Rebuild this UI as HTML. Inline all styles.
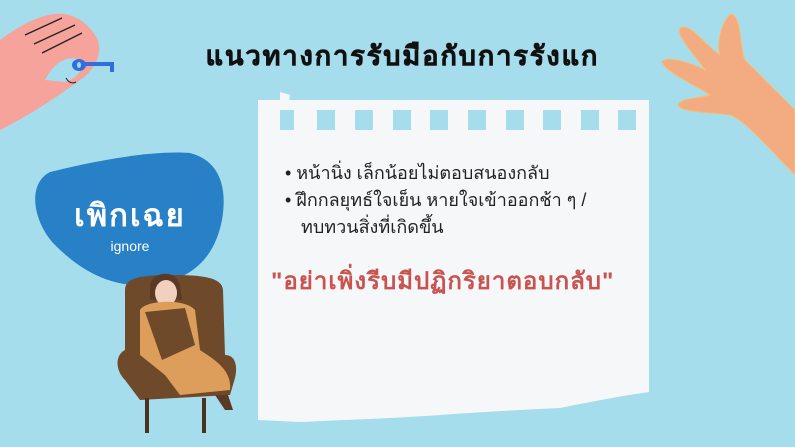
<!DOCTYPE html>
<html><head><meta charset="utf-8"><style>
body{margin:0;width:795px;height:447px;overflow:hidden;background:#a6dded;position:relative;font-family:"Liberation Sans","Noto Sans CJK SC",sans-serif}
.abs{position:absolute}
.sq{position:absolute;top:110px;width:18px;height:20px;background:#a6dded}
</style></head><body>
<svg class="abs" style="left:0;top:0" width="795" height="447">
 <path d="M0,40 C20,25 40,15 55,14 C75,12 90,25 98,40 C102,55 95,70 80,80 C60,95 30,115 0,130 Z" fill="#f6a39c"/>
 <path d="M45,80 C55,60 70,55 80,60 C85,68 78,78 65,82 Z" fill="#a6dded"/>
 <path d="M25,35 L62,18 M34,44 L75,25 M42,53 L82,33" stroke="#222" stroke-width="1.3" fill="none"/>
 <path d="M66,78 Q70,85 76,82" stroke="#222" stroke-width="1" fill="none"/>
 <ellipse cx="79" cy="65" rx="7" ry="6" fill="#2f6fe0"/><ellipse cx="79" cy="65" rx="2" ry="3" fill="#a6dded"/>
 <path d="M84,62 H114 V72 H110 V66 H84 Z" fill="#2f6fe0"/>
 <path d="M795,110 L795,175 C770,150 745,120 730,115 C705,112 680,112 678,105 C680,98 700,98 710,95 C695,85 665,72 662,62 C665,55 690,62 705,70 C695,55 675,35 680,28 C690,22 705,45 720,55 C715,40 725,15 732,14 C742,18 740,50 745,60 C760,75 780,95 795,110 Z" fill="#f3ab82" stroke="#f2c07a" stroke-width="1"/>
 <path d="M50,172 C90,162 150,150 190,153 C218,160 228,185 222,220 C215,255 195,280 150,285 C110,288 80,270 55,245 C35,225 25,185 50,172 Z" fill="#2880c6"/>
 <path d="M258,100 L649,100 L649,392 C620,396 590,402 560,408 C520,410 480,412 440,415 C400,418 340,420 300,422 L258,420 Z" fill="#f6f7f9"/>
 <path d="M280,92 L290,95 L283,130 L280,128 Z" fill="#f6f7f9"/>
 <path d="M125,290 C125,278 140,275 172,275 C205,275 222,278 223,290 L225,355 C235,355 238,365 235,378 L230,395 L140,400 L125,380 C115,370 115,355 125,350 Z" fill="#6e4a2b"/>
 <rect x="145" y="398" width="4" height="35" fill="#4a3220"/><rect x="202" y="398" width="4" height="35" fill="#4a3220"/>
 <path d="M150,285 C152,272 175,268 180,285 L182,300 L150,300 Z" fill="#5a3a24"/>
 <ellipse cx="166" cy="293" rx="11" ry="13" fill="#f1d0bf"/>
 <path d="M140,310 C145,300 185,298 195,310 L200,350 C215,360 232,370 230,390 L180,395 L165,375 L140,355 Z" fill="#de9e5b"/>
 <path d="M145,312 L185,308 L195,345 L162,360 Z" fill="#6e4a2b"/>
 <path d="M215,395 L225,410 L233,410 L228,395 Z" fill="#5a3a24"/>
</svg>
<div class="sq" style="left:280px;width:14px"></div>
<div class="sq" style="left:317px"></div><div class="sq" style="left:355px"></div><div class="sq" style="left:393px"></div><div class="sq" style="left:430px"></div><div class="sq" style="left:468px"></div><div class="sq" style="left:506px"></div><div class="sq" style="left:543px"></div><div class="sq" style="left:581px"></div><div class="sq" style="left:618px"></div>
<div class="abs" style="left:0;width:805px;top:34px;text-align:center;font-size:27px;font-weight:bold;color:#111;letter-spacing:2px;-webkit-text-stroke:0.6px #111">แนวทางการรับมือกับการรังแก</div>
<div class="abs" style="left:55px;width:150px;top:190px;text-align:center;color:#fff;font-size:31px;font-weight:bold;letter-spacing:2px">เพิกเฉย</div>
<div class="abs" style="left:55px;width:150px;top:238px;text-align:center;color:#fff;font-size:14px">ignore</div>
<div class="abs" style="left:285px;top:160px;font-size:18px;color:#222;line-height:27px">
 <div>•&nbsp;หน้านิ่ง เล็กน้อยไม่ตอบสนองกลับ</div>
 <div>•&nbsp;ฝึกกลยุทธ์ใจเย็น หายใจเข้าออกช้า ๆ /</div>
 <div style="padding-left:16px">ทบทวนสิ่งที่เกิดขึ้น</div>
</div>
<div class="abs" style="left:271px;top:261px;font-size:24px;font-weight:bold;color:#c9534f;letter-spacing:1px">"อย่าเพิ่งรีบมีปฏิกริยาตอบกลับ"</div>
</body></html>
